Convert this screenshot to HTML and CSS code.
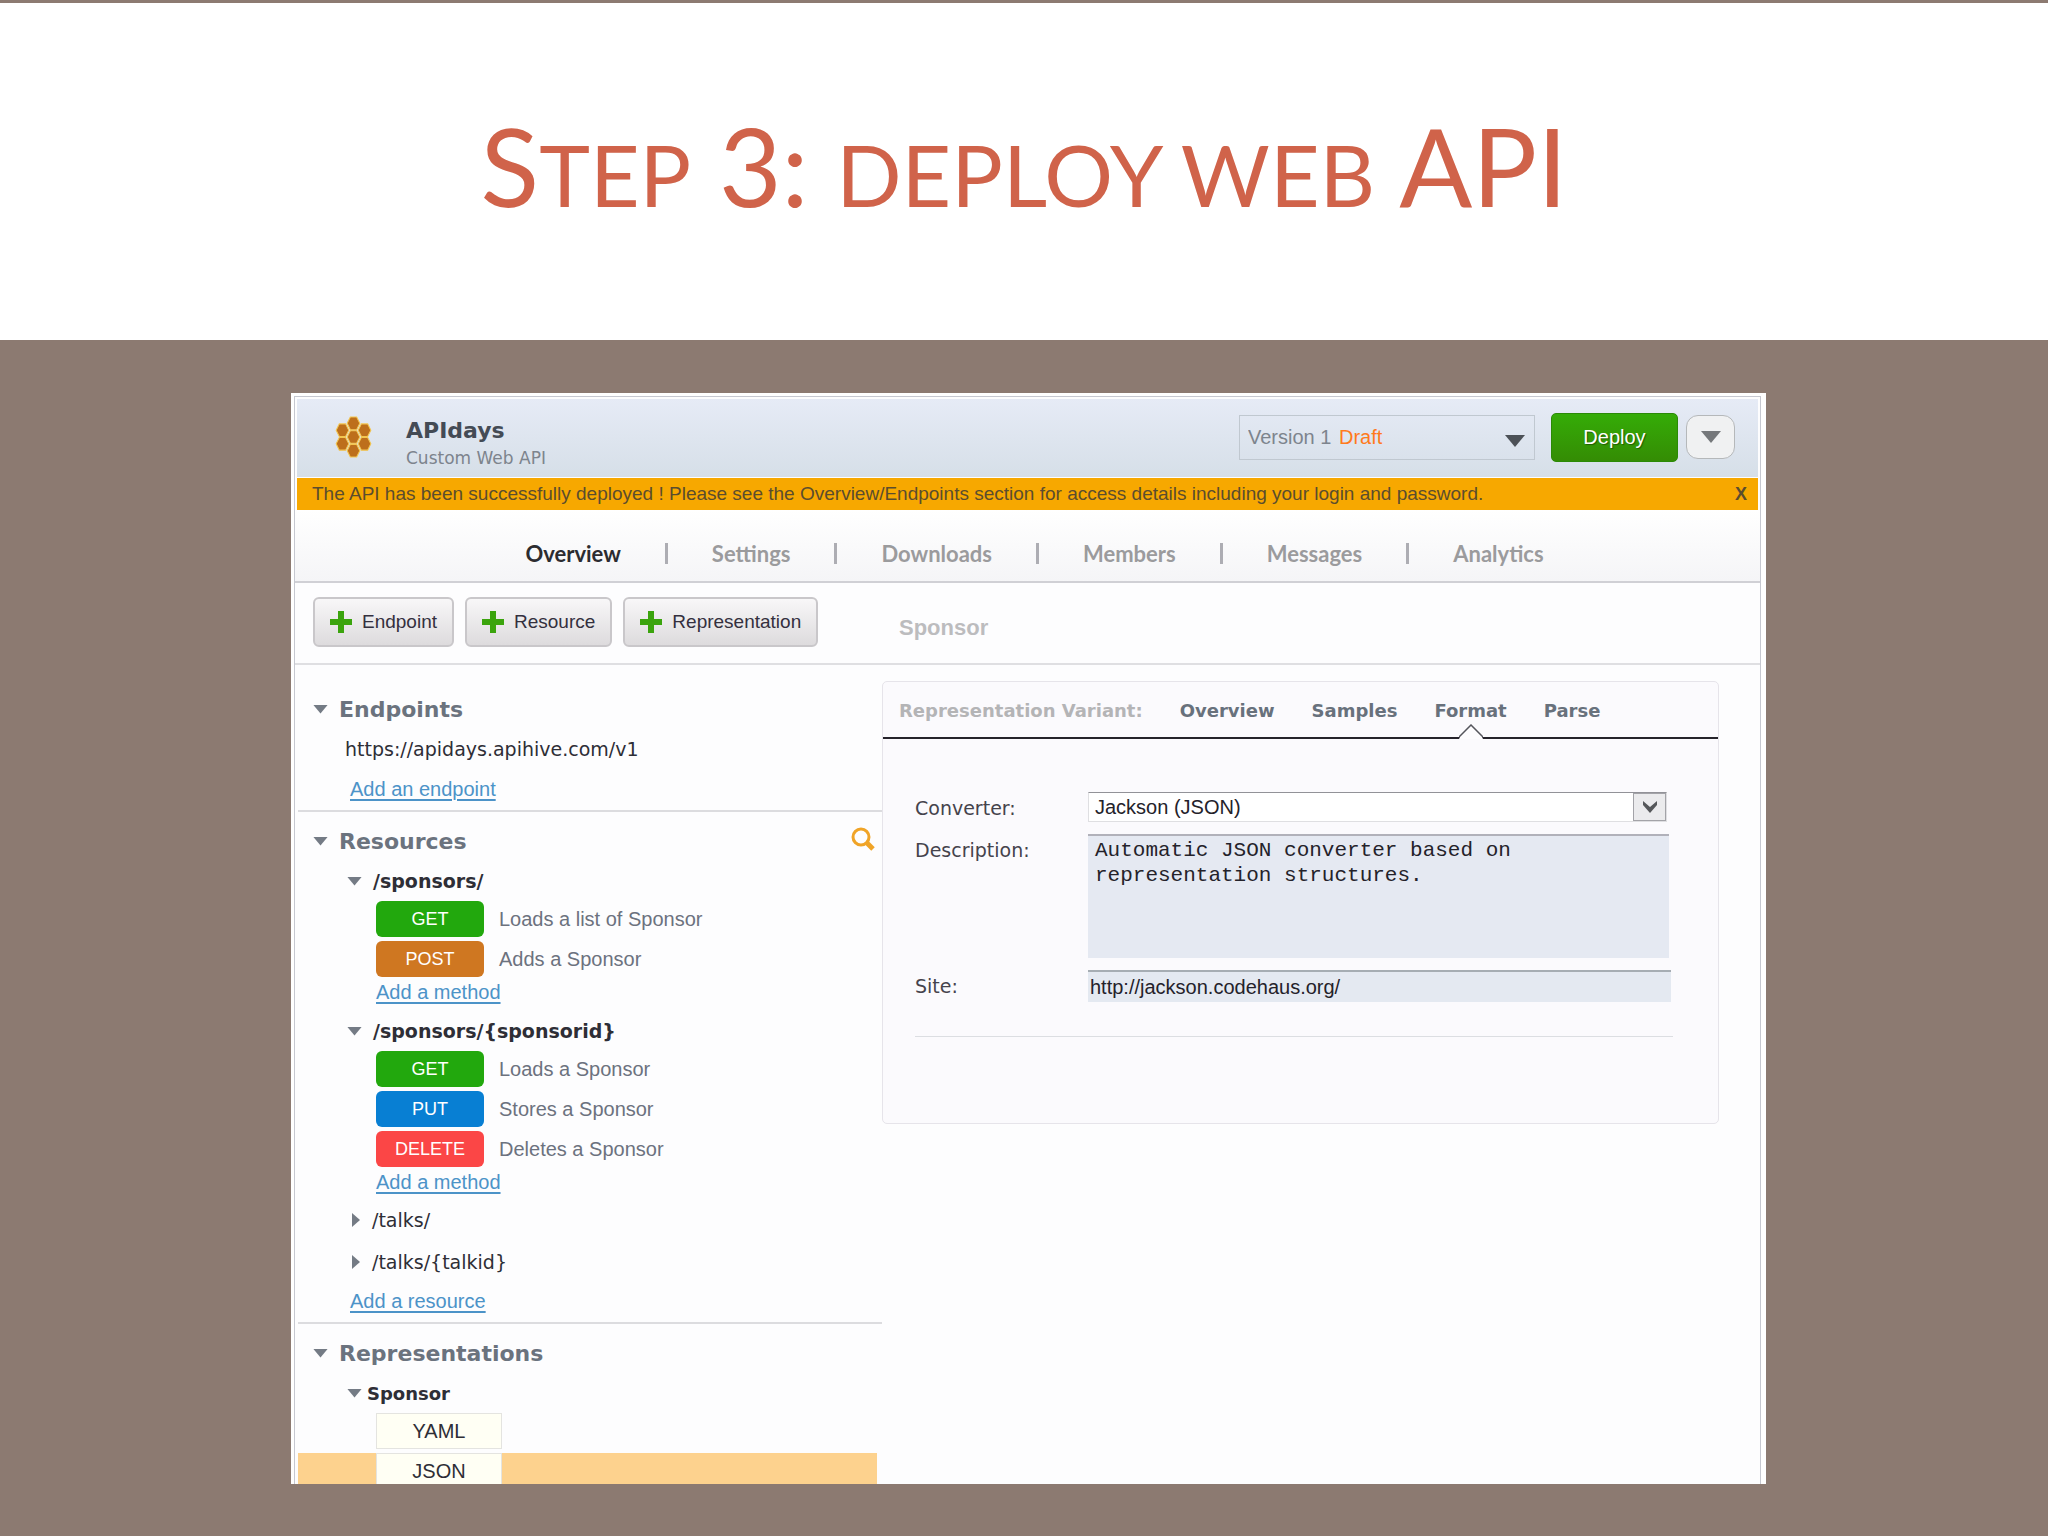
FILE: index.html
```html
<!DOCTYPE html>
<html lang="en">
<head>
    <meta charset="UTF-8">
    <meta name="viewport" content="width=device-width, initial-scale=1.0">
    <title>Step 3: deploy web API</title>
    <link rel="stylesheet" href="styles.css">
</head>
<body>
    <header class="slide-title">
        <h1>S<span class="small">tep</span> 3: <span class="small">deploy web</span> API</h1>
    </header>

    <main class="stage">
        <div class="window">
            <div class="app">
                <div class="app-header">
                    <svg class="logo" viewBox="0 0 35 40" aria-hidden="true">
                        <defs>
                            <path id="cell" d="M-3 -6H3L6 0L3 6H-3L-6 0Z"/>
                        </defs>
                        <g fill="#bd6f1c" stroke="#f3c650" stroke-width="1">
                            <use href="#cell" x="17.5" y="7"/>
                            <use href="#cell" x="7" y="13.5"/>
                            <use href="#cell" x="28" y="13.5"/>
                            <use href="#cell" x="17.5" y="20"/>
                            <use href="#cell" x="7" y="26.5"/>
                            <use href="#cell" x="28" y="26.5"/>
                            <use href="#cell" x="17.5" y="33"/>
                        </g>
                    </svg>
                    <div class="app-name">
                        <h2>APIdays</h2>
                        <p>Custom Web API</p>
                    </div>
                    <div class="version">
                        <select aria-label="Version">
                            <option>Version 1</option>
                        </select>
                        <span class="draft">Draft</span>
                        <svg class="version-arrow" viewBox="0 0 20 12" aria-hidden="true"><path d="M0 0H20L10 12Z" fill="#4c5157"/></svg>
                    </div>
                    <button type="button" class="deploy">Deploy</button>
                    <button type="button" class="more" aria-label="More actions">
                        <svg viewBox="0 0 20 12" width="20" height="12"><path d="M0 0H20L10 12Z" fill="#75787b"/></svg>
                    </button>
                </div>

                <div class="notice">
                    <span>The API has been successfully deployed ! Please see the Overview/Endpoints section for access details including your login and password.</span>
                    <button type="button" aria-label="Close">X</button>
                </div>

                <nav class="main-nav">
                    <a href="#" class="active">Overview</a><i></i>
                    <a href="#">Settings</a><i></i>
                    <a href="#">Downloads</a><i></i>
                    <a href="#">Members</a><i></i>
                    <a href="#">Messages</a><i></i>
                    <a href="#">Analytics</a>
                </nav>

                <div class="toolbar">
                    <div class="toolbar-buttons">
                        <button type="button"><svg viewBox="0 0 22 22"><path d="M8 0H14V8H22V14H14V22H8V14H0V8H8Z"/></svg>Endpoint</button>
                        <button type="button"><svg viewBox="0 0 22 22"><path d="M8 0H14V8H22V14H14V22H8V14H0V8H8Z"/></svg>Resource</button>
                        <button type="button"><svg viewBox="0 0 22 22"><path d="M8 0H14V8H22V14H14V22H8V14H0V8H8Z"/></svg>Representation</button>
                    </div>
                    <h2>Sponsor</h2>
                </div>

                <div class="content">
                    <aside class="sidebar">
                        <section class="section first">
                            <h3><span class="arrow"></span>Endpoints</h3>
                            <p class="url">https://apidays.apihive.com/v1</p>
                            <a href="#" class="add">Add an endpoint</a>
                        </section>

                        <section class="section">
                            <h3><span class="arrow"></span>Resources
                                <button type="button" class="search" aria-label="Search">
                                    <svg viewBox="0 0 24 24" width="24" height="24" fill="none" stroke="#f0a427">
                                        <circle cx="10" cy="10" r="8" stroke-width="3"/>
                                        <path d="M16 16L22 22" stroke-width="5"/>
                                    </svg>
                                </button>
                            </h3>
                            <div class="group">
                                <h4><span class="arrow"></span>/sponsors/</h4>
                                <div class="methods">
                                    <div class="method"><button type="button" class="get">GET</button><span>Loads a list of Sponsor</span></div>
                                    <div class="method"><button type="button" class="post">POST</button><span>Adds a Sponsor</span></div>
                                </div>
                                <a href="#" class="add-method">Add a method</a>
                            </div>
                            <div class="group">
                                <h4><span class="arrow"></span>/sponsors/{sponsorid}</h4>
                                <div class="methods">
                                    <div class="method"><button type="button" class="get">GET</button><span>Loads a Sponsor</span></div>
                                    <div class="method"><button type="button" class="put">PUT</button><span>Stores a Sponsor</span></div>
                                    <div class="method"><button type="button" class="delete">DELETE</button><span>Deletes a Sponsor</span></div>
                                </div>
                                <a href="#" class="add-method">Add a method</a>
                            </div>
                            <div class="group">
                                <h4 class="closed"><span class="arrow"></span>/talks/</h4>
                            </div>
                            <div class="group">
                                <h4 class="closed"><span class="arrow"></span>/talks/{talkid}</h4>
                            </div>
                            <a href="#" class="add">Add a resource</a>
                        </section>

                        <section class="section">
                            <h3><span class="arrow"></span>Representations</h3>
                            <h4 class="entity"><span class="arrow"></span>Sponsor</h4>
                            <div class="variants">
                                <div class="variant"><button type="button">YAML</button></div>
                                <div class="variant selected"><button type="button">JSON</button></div>
                            </div>
                        </section>
                    </aside>

                    <section class="panel">
                        <div class="tabs">
                            <span class="tabs-label">Representation Variant:</span>
                            <a href="#">Overview</a>
                            <a href="#">Samples</a>
                            <a href="#" class="active">Format
                                <svg class="notch" viewBox="0 0 24 15" aria-hidden="true">
                                    <path d="M0 15L1 13L12 1L23 13L24 15Z" fill="#fdfcfe"/>
                                    <path d="M0 13L12 1L24 13" fill="none" stroke="#55555c" stroke-width="1.5"/>
                                </svg>
                            </a>
                            <a href="#">Parse</a>
                        </div>
                        <form class="format-form">
                            <div class="fields">
                                <label for="converter">Converter:</label>
                                <div class="converter">
                                    <select id="converter">
                                        <option>Jackson (JSON)</option>
                                    </select>
                                    <span class="converter-arrow">
                                        <svg viewBox="0 0 14 12" width="14" height="12"><path d="M0 0L7 6L14 0V4L7 12L0 4Z" fill="#55575a"/></svg>
                                    </span>
                                </div>
                                <label for="description">Description:</label>
                                <textarea id="description">Automatic JSON converter based on representation structures.</textarea>
                                <label for="site">Site:</label>
                                <input type="text" id="site" value="http://jackson.codehaus.org/">
                            </div>
                            <hr>
                        </form>
                    </section>
                </div>
            </div>
        </div>
    </main>
</body>
</html>
```
FILE: styles.css
```css
* {
    box-sizing: border-box;
}

body {
    margin: 0;
    height: 100vh;
    display: flex;
    flex-direction: column;
    border-top: 3px solid #8c7a71;
    background: #8c7a71;
    font-family: "Liberation Sans", Arial, sans-serif;
    font-size: 20px;
    color: #2e2e36;
    overflow: hidden;
}

h1, h2, h3, h4, p {
    margin: 0;
}

button, select, input {
    font-family: inherit;
    font-size: 20px;
}

button {
    padding: 0;
    cursor: pointer;
}

.slide-title {
    background: #ffffff;
    padding: 96px 0 100px;
    text-align: center;
}

.slide-title h1 {
    font-family: Lato, "Open Sans", sans-serif;
    font-size: 108px;
    font-weight: 400;
    line-height: 132px;
    color: #d0634a;
}

.slide-title .small {
    font-size: 86px;
    text-transform: uppercase;
}

.stage {
    flex: 1;
    min-height: 0;
    display: flex;
    padding: 53px 282px 52px 291px;
}

.window {
    flex: 1;
    min-width: 0;
    padding: 3px 5px 0 3px;
    background: #ffffff;
    overflow: hidden;
}

.app {
    height: 100%;
    display: flex;
    flex-direction: column;
    border: 1px solid #c6c8d0;
    border-bottom: none;
    background: #fdfdfe;
}

/* header */
.app-header {
    display: flex;
    align-items: center;
    height: 78px;
    margin: 2px 2px 1px;
    padding: 0 23px 2px 38px;
    background: linear-gradient(#e6ebf6, #d6dfe8);
}

.logo {
    width: 37px;
    height: 42px;
}

.app-name {
    flex: 1;
    margin-left: 34px;
    padding-top: 14px;
    font-family: "DejaVu Sans", Verdana, sans-serif;
}

.app-name h2 {
    font-size: 22px;
    line-height: 28px;
    color: #444b55;
}

.app-name p {
    font-size: 17px;
    line-height: 26px;
    color: #7d848d;
}

.version {
    position: relative;
    width: 296px;
    margin-right: 16px;
}

.version select {
    width: 100%;
    height: 45px;
    padding: 0 8px;
    appearance: none;
    border: 1px solid #c0c8d0;
    border-radius: 0;
    background: transparent;
    color: #7d848d;
}

.draft {
    position: absolute;
    top: 11px;
    left: 100px;
    color: #ff7a1c;
    pointer-events: none;
}

.version-arrow {
    position: absolute;
    top: 20px;
    right: 10px;
    width: 20px;
    height: 12px;
    pointer-events: none;
}

.deploy {
    width: 127px;
    height: 49px;
    margin-right: 8px;
    border: 1px solid #2b8a06;
    border-radius: 5px;
    background: linear-gradient(#35ac07, #348c04);
    color: #ffffff;
    text-shadow: 1px 1px 1px #1f5c02;
}

.more {
    display: flex;
    align-items: center;
    justify-content: center;
    width: 49px;
    height: 44px;
    border: 1px solid #b5b8ba;
    border-radius: 12px;
    background: #f0f1f2;
}

.notice {
    display: flex;
    justify-content: space-between;
    align-items: center;
    height: 32px;
    margin: 0 2px;
    padding: 0 11px 0 15px;
    background: #f7a800;
    font-size: 19px;
    color: #5b4d2e;
}

.notice button {
    border: none;
    background: none;
    font-size: 18px;
    font-weight: 700;
    color: #5b4d2e;
}

/* navigation */
.main-nav {
    display: flex;
    justify-content: center;
    align-items: center;
    gap: 44px;
    height: 73px;
    padding: 16px 0 0 14px;
    border-bottom: 2px solid #d0d0d5;
    background: linear-gradient(#ffffff, #f5f5f7);
    font-family: Lato, sans-serif;
    font-size: 22px;
    font-weight: 700;
}

.main-nav a {
    color: #9b9b9d;
    text-decoration: none;
}

.main-nav a.active {
    color: #2c2c30;
}

.main-nav i {
    width: 3px;
    height: 21px;
    background: #adadb3;
}

.toolbar {
    display: flex;
    align-items: center;
    height: 82px;
    padding: 0 18px 2px;
    border-bottom: 2px solid #dfdfe2;
}

.toolbar-buttons {
    display: flex;
    gap: 11px;
    width: 586px;
}

.toolbar button {
    display: flex;
    align-items: center;
    height: 50px;
    padding: 0 15px 1px;
    border: 2px solid #c9c7ca;
    border-radius: 6px;
    background: linear-gradient(#f8f7f8, #dddbdd);
    font-size: 19px;
    color: #34303e;
}

.toolbar svg {
    width: 22px;
    height: 22px;
    margin-right: 10px;
    fill: #3ba40d;
}

.toolbar h2 {
    padding-top: 12px;
    font-size: 22px;
    color: #bcbcbe;
}

.content {
    flex: 1;
    min-height: 0;
    display: flex;
    align-items: flex-start;
}

/* sidebar */
.sidebar {
    width: 587px;
    padding-left: 3px;
}

.section {
    padding: 9px 0 1px;
    border-bottom: 2px solid #dcdcdf;
}

.section.first {
    padding-top: 24px;
}

.section:last-child {
    border-bottom: none;
}

.section h3 {
    display: flex;
    align-items: center;
    height: 40px;
    padding: 0 7px 0 15px;
    font-family: "DejaVu Sans", Verdana, sans-serif;
    font-size: 22px;
    color: #6b737e;
}

.arrow {
    width: 15px;
    height: 9px;
    margin-right: 11px;
    background: #747b85;
    clip-path: polygon(0 0, 100% 0, 50% 100%);
}

.search {
    display: flex;
    margin-left: auto;
    padding-bottom: 4px;
    border: none;
    background: none;
}

.url {
    padding-left: 47px;
    font-family: "DejaVu Sans", Verdana, sans-serif;
    font-size: 19px;
    line-height: 40px;
}

.add, .add-method {
    display: block;
    color: #4c93c8;
    text-underline-offset: 3px;
    text-decoration-thickness: 2px;
}

.add {
    padding-left: 52px;
    line-height: 40px;
}

.add-method {
    padding-left: 78px;
    line-height: 30px;
}

.group + .group {
    margin-top: 4px;
}

.section h4 {
    display: flex;
    align-items: center;
    height: 40px;
    padding-left: 49px;
    font-family: "DejaVu Sans", Verdana, sans-serif;
    font-size: 19px;
}

.section h4.closed {
    height: 38px;
    padding-left: 54px;
    font-weight: 400;
}

.closed .arrow {
    width: 8px;
    height: 14px;
    margin-right: 12px;
    clip-path: polygon(0 0, 100% 50%, 0 100%);
}

.section h4.entity {
    font-size: 18px;
}

.entity .arrow {
    margin-right: 5px;
}

.methods, .variants {
    display: flex;
    flex-direction: column;
    gap: 4px;
}

.method {
    display: flex;
    align-items: center;
    gap: 15px;
    padding-left: 78px;
    color: #6c727e;
}

.method button {
    width: 108px;
    height: 36px;
    border: none;
    border-radius: 6px;
    font-size: 18px;
    color: #ffffff;
}

.get {
    background: #22a80d;
}

.post {
    background: #cf7721;
}

.put {
    background: #087fd3;
}

.delete {
    background: #fb4646;
}

.variant {
    margin-right: 5px;
    padding-left: 78px;
}

.variant.selected {
    background: #fdd28e;
}

.variant button {
    display: block;
    width: 126px;
    height: 36px;
    border: 1px solid #e4e4e0;
    background: #fffff4;
    color: #2e2e36;
}

/* variant panel */
.panel {
    flex: 1;
    margin: 16px 41px 0 0;
    border: 1px solid #e6e4ea;
    border-radius: 5px;
    background: #fbfafd;
}

.tabs {
    display: flex;
    align-items: center;
    gap: 37px;
    height: 57px;
    padding: 2px 16px 0;
    border-bottom: 2px solid #25232b;
    font-family: "DejaVu Sans", Verdana, sans-serif;
    font-size: 18px;
    font-weight: 700;
}

.tabs-label {
    color: #b4b4b6;
}

.tabs a {
    position: relative;
    color: #68717c;
    text-decoration: none;
}

.notch {
    position: absolute;
    top: 24px;
    left: 50%;
    width: 24px;
    height: 15px;
    margin-left: -12px;
}

.format-form {
    padding: 53px 45px 86px 32px;
}

.fields {
    display: grid;
    grid-template-columns: 173px 1fr;
    gap: 12px 0;
    padding-right: 2px;
}

.fields label {
    padding-top: 5px;
    font-family: "DejaVu Sans", Verdana, sans-serif;
    font-size: 19px;
    color: #45434c;
}

.converter {
    position: relative;
    height: 30px;
    margin-right: 4px;
}

.converter select {
    width: 100%;
    height: 30px;
    padding: 0 6px;
    appearance: none;
    border: 1px solid #dfdfe2;
    border-top-color: #929298;
    border-radius: 0;
    background: #ffffff;
    color: #24222a;
}

.converter-arrow {
    position: absolute;
    top: 1px;
    right: 1px;
    display: flex;
    align-items: center;
    justify-content: center;
    width: 33px;
    height: 28px;
    border: 1px solid #a3a3a8;
    background: #ebebed;
    pointer-events: none;
}

.fields textarea {
    height: 124px;
    margin-right: 2px;
    padding: 2px 7px;
    border: none;
    border-top: 2px solid #b1b1ba;
    background: #e5e9f2;
    font-family: "Liberation Mono", "Courier New", monospace;
    font-size: 21px;
    line-height: 25px;
    color: #24222a;
    resize: none;
}

.fields input {
    height: 32px;
    padding: 0 2px;
    border: none;
    border-top: 2px solid #a6adb3;
    background: #e4e9f1;
    color: #24222a;
}

.format-form hr {
    height: 1px;
    margin: 34px 0 0;
    border: none;
    background: #dcdee2;
}
```
